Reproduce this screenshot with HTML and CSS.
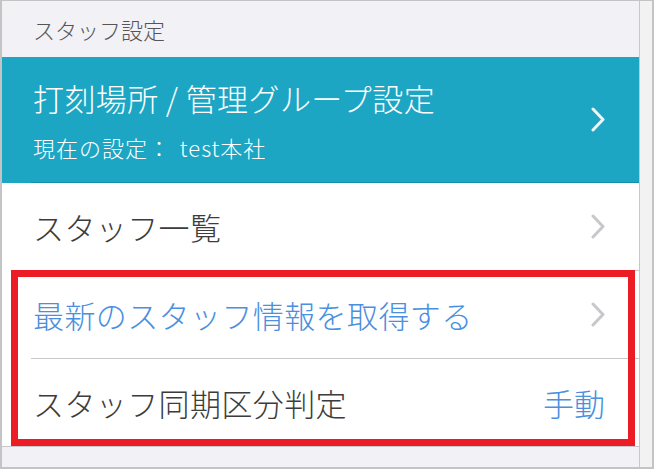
FILE: index.html
```html
<!DOCTYPE html>
<html lang="ja">
<head>
<meta charset="utf-8">
<title>スタッフ設定</title>
<link rel="stylesheet" href="styles.css">
</head>
<body>
<div class="screen">
  <div class="main">
    <div class="section-header">スタッフ設定</div>
    <div class="hero">
      <div class="hero-text">
        <div class="hero-title">打刻場所 / 管理グループ設定</div>
        <div class="hero-sub">現在の設定： test本社</div>
      </div>
      <svg class="chev chev-white" viewBox="0 0 14 25" width="14" height="25"><path d="M2 2 L12 12.5 L2 23" fill="none" stroke="currentColor" stroke-width="3" stroke-linecap="round" stroke-linejoin="round"/></svg>
    </div>
    <div class="row">
      <div class="row-inner">
        <span class="label">スタッフ一覧</span>
        <svg class="chev chev-gray" viewBox="0 0 14 25" width="14" height="25"><path d="M2 2 L12 12.5 L2 23" fill="none" stroke="currentColor" stroke-width="3" stroke-linecap="round" stroke-linejoin="round"/></svg>
      </div>
    </div>
    <div class="row">
      <div class="row-inner">
        <span class="label label-link">最新のスタッフ情報を取得する</span>
        <svg class="chev chev-gray" viewBox="0 0 14 25" width="14" height="25"><path d="M2 2 L12 12.5 L2 23" fill="none" stroke="currentColor" stroke-width="3" stroke-linecap="round" stroke-linejoin="round"/></svg>
      </div>
    </div>
    <div class="row row-last">
      <div class="row-inner">
        <span class="label">スタッフ同期区分判定</span>
        <span class="value">手動</span>
      </div>
    </div>
    <div class="footer-space"></div>
  </div>
  <div class="track"></div>
  <div class="highlight"></div>
</div>
</body>
</html>
```
FILE: styles.css
```css
* { box-sizing: border-box; }
html, body { margin: 0; padding: 0; }
body {
  font-family: "Noto Sans CJK JP", "Noto Sans", sans-serif;
  font-weight: 300;
  background: #ffffff;
}
.screen {
  position: relative;
  width: 654px;
  height: 469px;
  border-style: solid;
  border-color: #c4c4c4;
  border-width: 1px 2px 2px 2px;
  display: flex;
  overflow: hidden;
}
.main {
  width: 637px;
  display: flex;
  flex-direction: column;
  background: #ffffff;
}
.track {
  width: 12px;
  background: #f2f2f2;
  border-left: 1px solid #c8c8c8;
  box-sizing: content-box;
}
.section-header {
  height: 56px;
  background: #f1f1f6;
  color: #555555;
  font-size: 22px;
  line-height: 56px;
  padding-left: 31px;
}
.hero {
  position: relative;
  height: 126px;
  background: #1ca6c4;
  display: flex;
  align-items: center;
  justify-content: space-between;
  padding: 0 34px 2px 31px;
}
.hero::after {
  content: "";
  position: absolute;
  left: 29px;
  right: 0;
  bottom: 0;
  height: 1px;
  background: #168ea9;
}
.hero-title {
  color: #ffffff;
  font-size: 31px;
  line-height: 40px;
  letter-spacing: 0.4px;
}
.hero-sub {
  color: #ffffff;
  font-size: 22px;
  line-height: 28px;
  margin-top: 15px;
  letter-spacing: 1px;
  word-spacing: 3px;
}
.chev { display: block; flex: none; }
.chev-white { color: #f2f2f2; }
.chev-gray { color: #c7c7cc; }
.row {
  height: 88px;
  padding-left: 29px;
}
.row-inner {
  height: 88px;
  display: flex;
  align-items: center;
  justify-content: space-between;
  padding: 0 34px 0 2px;
  border-bottom: 1px solid #c8c7cc;
}
.row-last {
  padding-left: 0;
  border-bottom: 1px solid #c8c7cc;
}
.row-last .row-inner {
  height: 87px;
  border-bottom: none;
  padding-left: 31px;
}
.label {
  font-size: 31px;
  letter-spacing: 0.4px;
  color: #3c3c3c;
}
.label-link { color: #4a8fe0; }
.value {
  font-size: 31px;
  color: #4a8fe0;
}
.footer-space {
  flex: 1;
  background: #f1f1f6;
}
.highlight {
  position: absolute;
  left: 9px;
  top: 269px;
  width: 624px;
  height: 176px;
  border: 7px solid #ec1c24;
  pointer-events: none;
}
```
